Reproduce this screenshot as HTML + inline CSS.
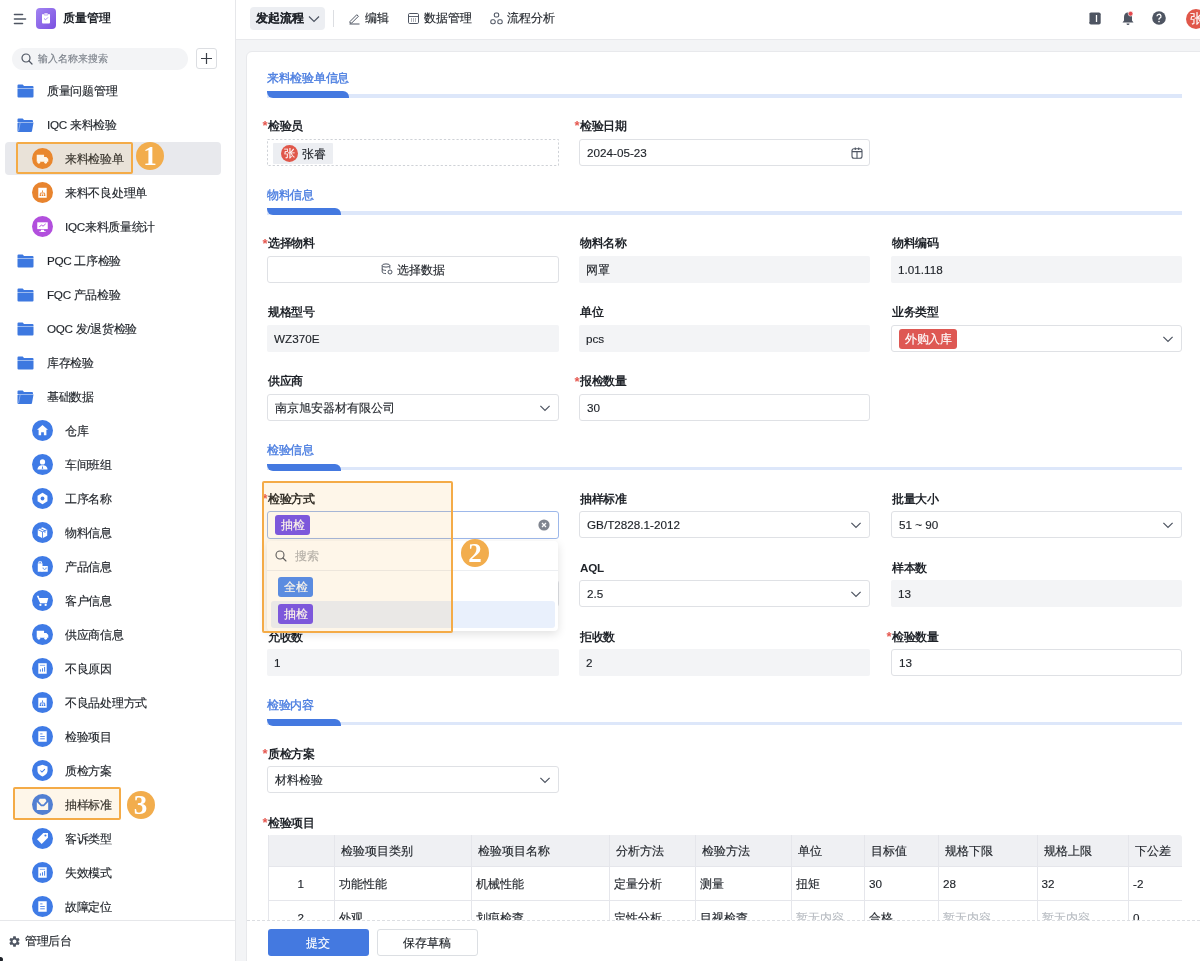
<!DOCTYPE html><html><head><meta charset="utf-8"><style>
*{box-sizing:border-box;margin:0;padding:0}
html,body{width:1200px;height:961px;overflow:hidden;background:#fff;font-family:"Liberation Sans",sans-serif;color:#1f2329;font-size:11.7px}
.A{position:absolute}
#side{position:absolute;left:0;top:0;width:236px;height:961px;background:#fff;border-right:1px solid #e6e7ea}
#top{position:absolute;left:236px;top:0;width:964px;height:40px;background:#fff;border-bottom:1px solid #e8e9ec}
#gray{position:absolute;left:236px;top:40px;width:964px;height:921px;background:#f3f4f6}
#card{position:absolute;left:246px;top:51px;width:970px;height:920px;background:#fff;border:1px solid #e8e9ec;border-radius:6px}
.mt{position:absolute;font-size:11.7px;line-height:14px;letter-spacing:-0.3px;color:#1f2329;white-space:nowrap}
.mic{position:absolute}
.sec{position:absolute;font-size:11.7px;letter-spacing:-0.3px;-webkit-text-stroke-width:0.35px;color:#4a7de0;line-height:14px;white-space:nowrap}
.bar{position:absolute;height:3.5px;background:#dde7fa}
.bard{position:absolute;height:7px;background:#4479e0;border-radius:0 6px 0 6px}
.lbl{position:absolute;-webkit-text-stroke-width:0;font-size:11.7px;letter-spacing:-0.3px;font-weight:bold;line-height:14px;white-space:nowrap;color:#1f2329}
.lbl i{font-style:normal;color:#e5574f;font-weight:bold;font-size:13px;position:absolute;left:-5.5px;top:0.5px}
.inp{position:absolute;height:27px;border:1px solid #dfe1e5;border-radius:3px;background:#fff;font-size:11.7px;line-height:25px;padding-left:7px;white-space:nowrap}
.ro{position:absolute;height:27px;background:#f3f4f6;border-radius:2px;font-size:11.7px;line-height:27px;padding-left:7px;white-space:nowrap}
.chev{position:absolute;right:7px;top:8px}
.tag{position:absolute;height:20px;line-height:20px;border-radius:3px;color:#fff;font-size:11.7px;padding:0 6px;letter-spacing:-0.5px;white-space:nowrap}
table{border-collapse:collapse}
</style></head><body><div id="root" style="position:absolute;left:0;top:0;width:1200px;height:961px;overflow:hidden;will-change:transform;-webkit-text-stroke-width:0.15px">
<div id="side">
<svg class="A" style="left:13px;top:13px" width="14" height="12" viewBox="0 0 14 12"><path d="M1.5 1.5h8M1.5 6h11M1.5 10.5h8" stroke="#4e5562" stroke-width="1.6" stroke-linecap="round"/></svg>
<div class="A" style="left:36px;top:8px;width:20px;height:21px;border-radius:4px;background:linear-gradient(135deg,#a284f2,#7a4fe0)"></div>
<svg class="A" style="left:36px;top:8px" width="20" height="21" viewBox="0 0 20 21"><rect x="6" y="6" width="8" height="9.5" rx="1" fill="#fff"/><rect x="8" y="5" width="4" height="2" rx="0.6" fill="#fff" stroke="#8d66ea" stroke-width="0.6"/><path d="M8 10.5l1.6 1.3 2.4-2.4" stroke="#9b7bef" stroke-width="0.9" fill="none"/></svg>
<div class="A" style="left:63px;top:11px;font-size:11.7px;font-weight:bold;line-height:14px;color:#1f2329;-webkit-text-stroke-width:0">质量管理</div>
<div class="A" style="left:12px;top:48px;width:176px;height:22px;border-radius:11px;background:#f3f4f6"></div>
<svg class="A" style="left:21px;top:53px" width="12" height="12" viewBox="0 0 12 12"><circle cx="5" cy="5" r="4" stroke="#4e5562" stroke-width="1.2" fill="none"/><path d="M8 8l3 3" stroke="#4e5562" stroke-width="1.2" stroke-linecap="round"/></svg>
<div class="A" style="left:38px;top:52px;font-size:10px;line-height:14px;color:#7d838c">输入名称来搜索</div>
<div class="A" style="left:196px;top:48px;width:21px;height:21px;border:1px solid #dcdee2;border-radius:3px"></div>
<svg class="A" style="left:196px;top:48px" width="21" height="21" viewBox="0 0 21 21"><path d="M10.5 5v11M5 10.5h11" stroke="#3a3f47" stroke-width="1.2"/></svg>
<div class="A" style="left:5px;top:142px;width:216px;height:33px;border-radius:4px;background:#e8e9ed"></div>
<div class="mic" style="left:17px;top:84px"><svg width="17" height="14" viewBox="0 0 17 14"><path d="M0.5 1.5a1 1 0 0 1 1-1h4.2l1.3 1.4h8.5a1 1 0 0 1 1 1v1.2h-16z" fill="#3d78e0"/><path d="M0.5 4.6h16v8a1 1 0 0 1-1 1h-14a1 1 0 0 1-1-1z" fill="#3d78e0"/></svg></div>
<div class="mt" style="left:47px;top:84px">质量问题管理</div>
<div class="mic" style="left:17px;top:118px"><svg width="17" height="14" viewBox="0 0 17 14"><path d="M0.5 1.5a1 1 0 0 1 1-1h4.2l1.3 1.4h8a1 1 0 0 1 1 1v1.2h-15.5z" fill="#3d78e0"/><path d="M0.5 12.5v-7.5a1 1 0 0 1 1-0.4h15l-1.5 8.5a1 1 0 0 1-1 0.9h-12.5a1 1 0 0 1-1-1z" fill="#3d78e0"/><path d="M1.5 13.2l1.6-8.2" stroke="#b9cdf5" stroke-width="0.6" fill="none"/></svg></div>
<div class="mt" style="left:47px;top:118px">IQC 来料检验</div>
<div class="mic" style="left:32px;top:148px"><svg width="21" height="21" viewBox="0 0 20 20"><circle cx="10" cy="10" r="10" fill="#e8842e"/><path d="M4.5 6.5h7v6.5h-7z M11.5 8.5h2.2l1.8 2v2.5h-4z" fill="#fff"/><circle cx="6.5" cy="13.6" r="1.3" fill="#fff"/><circle cx="13" cy="13.6" r="1.3" fill="#fff"/></svg></div>
<div class="mt" style="left:65px;top:152px">来料检验单</div>
<div class="mic" style="left:32px;top:182px"><svg width="21" height="21" viewBox="0 0 20 20"><circle cx="10" cy="10" r="10" fill="#e8842e"/><path d="M6 5.5h8v9.5h-8z" fill="#fff"/><path d="M10 8v2M8 12v-1.5h4V12" stroke="#e8842e" stroke-width="0.8" fill="none"/><circle cx="8" cy="12.5" r="0.8" fill="#e8842e"/><circle cx="10" cy="12.5" r="0.8" fill="#e8842e"/><circle cx="12" cy="12.5" r="0.8" fill="#e8842e"/></svg></div>
<div class="mt" style="left:65px;top:186px">来料不良处理单</div>
<div class="mic" style="left:32px;top:216px"><svg width="21" height="21" viewBox="0 0 20 20"><circle cx="10" cy="10" r="10" fill="#b24fdd"/><path d="M5 6h10v6.5h-10z" fill="#fff"/><path d="M8.5 14.5h3v-1.5h-3z M7 14.5h6v0.8h-6z" fill="#fff"/><path d="M7 10.5l2-2 1.5 1.2 2.5-2.2" stroke="#b24fdd" stroke-width="0.9" fill="none"/></svg></div>
<div class="mt" style="left:65px;top:220px">IQC来料质量统计</div>
<div class="mic" style="left:17px;top:254px"><svg width="17" height="14" viewBox="0 0 17 14"><path d="M0.5 1.5a1 1 0 0 1 1-1h4.2l1.3 1.4h8.5a1 1 0 0 1 1 1v1.2h-16z" fill="#3d78e0"/><path d="M0.5 4.6h16v8a1 1 0 0 1-1 1h-14a1 1 0 0 1-1-1z" fill="#3d78e0"/></svg></div>
<div class="mt" style="left:47px;top:254px">PQC 工序检验</div>
<div class="mic" style="left:17px;top:288px"><svg width="17" height="14" viewBox="0 0 17 14"><path d="M0.5 1.5a1 1 0 0 1 1-1h4.2l1.3 1.4h8.5a1 1 0 0 1 1 1v1.2h-16z" fill="#3d78e0"/><path d="M0.5 4.6h16v8a1 1 0 0 1-1 1h-14a1 1 0 0 1-1-1z" fill="#3d78e0"/></svg></div>
<div class="mt" style="left:47px;top:288px">FQC 产品检验</div>
<div class="mic" style="left:17px;top:322px"><svg width="17" height="14" viewBox="0 0 17 14"><path d="M0.5 1.5a1 1 0 0 1 1-1h4.2l1.3 1.4h8.5a1 1 0 0 1 1 1v1.2h-16z" fill="#3d78e0"/><path d="M0.5 4.6h16v8a1 1 0 0 1-1 1h-14a1 1 0 0 1-1-1z" fill="#3d78e0"/></svg></div>
<div class="mt" style="left:47px;top:322px">OQC 发/退货检验</div>
<div class="mic" style="left:17px;top:356px"><svg width="17" height="14" viewBox="0 0 17 14"><path d="M0.5 1.5a1 1 0 0 1 1-1h4.2l1.3 1.4h8.5a1 1 0 0 1 1 1v1.2h-16z" fill="#3d78e0"/><path d="M0.5 4.6h16v8a1 1 0 0 1-1 1h-14a1 1 0 0 1-1-1z" fill="#3d78e0"/></svg></div>
<div class="mt" style="left:47px;top:356px">库存检验</div>
<div class="mic" style="left:17px;top:390px"><svg width="17" height="14" viewBox="0 0 17 14"><path d="M0.5 1.5a1 1 0 0 1 1-1h4.2l1.3 1.4h8a1 1 0 0 1 1 1v1.2h-15.5z" fill="#3d78e0"/><path d="M0.5 12.5v-7.5a1 1 0 0 1 1-0.4h15l-1.5 8.5a1 1 0 0 1-1 0.9h-12.5a1 1 0 0 1-1-1z" fill="#3d78e0"/><path d="M1.5 13.2l1.6-8.2" stroke="#b9cdf5" stroke-width="0.6" fill="none"/></svg></div>
<div class="mt" style="left:47px;top:390px">基础数据</div>
<div class="mic" style="left:32px;top:420px"><svg width="21" height="21" viewBox="0 0 20 20"><circle cx="10" cy="10" r="10" fill="#3f7be6"/><path d="M10 4.8l5.2 4.6h-1.5v5.2h-2.4v-3h-2.6v3h-2.4v-5.2h-1.5z" fill="#fff"/></svg></div>
<div class="mt" style="left:65px;top:424px">仓库</div>
<div class="mic" style="left:32px;top:454px"><svg width="21" height="21" viewBox="0 0 20 20"><circle cx="10" cy="10" r="10" fill="#3f7be6"/><circle cx="10" cy="7.6" r="2.5" fill="#fff"/><path d="M5.2 14.8c0-2.8 2.2-4.2 4.8-4.2s4.8 1.4 4.8 4.2z" fill="#fff"/><path d="M10 11l-0.7 3h1.4z" fill="#3f7be6"/></svg></div>
<div class="mt" style="left:65px;top:458px">车间班组</div>
<div class="mic" style="left:32px;top:488px"><svg width="21" height="21" viewBox="0 0 20 20"><circle cx="10" cy="10" r="10" fill="#3f7be6"/><path d="M10 4.6l4.7 2.7v5.4l-4.7 2.7-4.7-2.7v-5.4z" fill="#fff"/><circle cx="10" cy="10" r="1.8" fill="#3f7be6"/></svg></div>
<div class="mt" style="left:65px;top:492px">工序名称</div>
<div class="mic" style="left:32px;top:522px"><svg width="21" height="21" viewBox="0 0 20 20"><circle cx="10" cy="10" r="10" fill="#3f7be6"/><path d="M5.5 7.2l4.5-2.2 4.5 2.2v6l-4.5 2.2-4.5-2.2z" fill="#fff"/><path d="M5.5 7.2l4.5 2.2 4.5-2.2M10 9.4v6M7.8 6.1l4.5 2.2v2" stroke="#3f7be6" stroke-width="0.8" fill="none"/></svg></div>
<div class="mt" style="left:65px;top:526px">物料信息</div>
<div class="mic" style="left:32px;top:556px"><svg width="21" height="21" viewBox="0 0 20 20"><circle cx="10" cy="10" r="10" fill="#3f7be6"/><path d="M5.5 7h4.5v8h-4.5z" fill="#fff"/><path d="M9 9.5h6v5.5h-6z" fill="#fff"/><path d="M10.5 11c0 1.2 0.8 1.8 1.5 1.8s1.5-0.6 1.5-1.8" stroke="#3f7be6" stroke-width="0.8" fill="none"/><path d="M6.5 7v-1.5h2.5V7" stroke="#fff" stroke-width="0.9" fill="none"/></svg></div>
<div class="mt" style="left:65px;top:560px">产品信息</div>
<div class="mic" style="left:32px;top:590px"><svg width="21" height="21" viewBox="0 0 20 20"><circle cx="10" cy="10" r="10" fill="#3f7be6"/><path d="M4.5 5.5h1.8l0.7 2h8.5l-1.3 5h-6.4z" fill="#fff"/><circle cx="8" cy="14.2" r="1.1" fill="#fff"/><circle cx="13" cy="14.2" r="1.1" fill="#fff"/></svg></div>
<div class="mt" style="left:65px;top:594px">客户信息</div>
<div class="mic" style="left:32px;top:624px"><svg width="21" height="21" viewBox="0 0 20 20"><circle cx="10" cy="10" r="10" fill="#3f7be6"/><path d="M4.5 6.5h7v6.5h-7z M11.5 8.5h2.2l1.8 2v2.5h-4z" fill="#fff"/><circle cx="6.5" cy="13.6" r="1.3" fill="#fff"/><circle cx="13" cy="13.6" r="1.3" fill="#fff"/></svg></div>
<div class="mt" style="left:65px;top:628px">供应商信息</div>
<div class="mic" style="left:32px;top:658px"><svg width="21" height="21" viewBox="0 0 20 20"><circle cx="10" cy="10" r="10" fill="#3f7be6"/><path d="M6 5h8v10h-8z" fill="#fff"/><path d="M8 13v-2.2M10 13v-3.2M12 13v-4.5" stroke="#3f7be6" stroke-width="0.9"/><path d="M7.5 7h5" stroke="#3f7be6" stroke-width="0.6"/></svg></div>
<div class="mt" style="left:65px;top:662px">不良原因</div>
<div class="mic" style="left:32px;top:692px"><svg width="21" height="21" viewBox="0 0 20 20"><circle cx="10" cy="10" r="10" fill="#3f7be6"/><path d="M6 5.5h8v9.5h-8z" fill="#fff"/><path d="M10 8v2M8 12v-1.5h4V12" stroke="#3f7be6" stroke-width="0.8" fill="none"/><circle cx="8" cy="12.5" r="0.8" fill="#3f7be6"/><circle cx="10" cy="12.5" r="0.8" fill="#3f7be6"/><circle cx="12" cy="12.5" r="0.8" fill="#3f7be6"/></svg></div>
<div class="mt" style="left:65px;top:696px">不良品处理方式</div>
<div class="mic" style="left:32px;top:726px"><svg width="21" height="21" viewBox="0 0 20 20"><circle cx="10" cy="10" r="10" fill="#3f7be6"/><path d="M6 5h8v10h-8z" fill="#fff"/><path d="M7.8 7.5h2.2M7.8 10h4.4M7.8 12.2h4.4" stroke="#3f7be6" stroke-width="0.8"/></svg></div>
<div class="mt" style="left:65px;top:730px">检验项目</div>
<div class="mic" style="left:32px;top:760px"><svg width="21" height="21" viewBox="0 0 20 20"><circle cx="10" cy="10" r="10" fill="#3f7be6"/><path d="M10 4.5l4.8 1.8v3.8c0 3-2.3 4.6-4.8 5.5-2.5-0.9-4.8-2.5-4.8-5.5v-3.8z" fill="#fff"/><path d="M8 10l1.5 1.5 2.8-2.8" stroke="#3f7be6" stroke-width="1" fill="none"/></svg></div>
<div class="mt" style="left:65px;top:764px">质检方案</div>
<div class="mic" style="left:32px;top:794px"><svg width="21" height="21" viewBox="0 0 20 20"><circle cx="10" cy="10" r="10" fill="#3f7be6"/><path d="M4.6 7.6L8.6 11.6H11.4L15.4 7.6V15.2H4.6Z" fill="#fff"/><path d="M6.2 6.6L7.4 4.6H12.6L13.8 6.6L10.9 9.9H9.1Z" fill="#fff"/></svg></div>
<div class="mt" style="left:65px;top:798px">抽样标准</div>
<div class="mic" style="left:32px;top:828px"><svg width="21" height="21" viewBox="0 0 20 20"><circle cx="10" cy="10" r="10" fill="#3f7be6"/><path d="M10.8 4.8h4.4v4.4l-6 6-4.4-4.4z" fill="#fff"/><circle cx="12.8" cy="7.2" r="1" fill="#3f7be6"/></svg></div>
<div class="mt" style="left:65px;top:832px">客诉类型</div>
<div class="mic" style="left:32px;top:862px"><svg width="21" height="21" viewBox="0 0 20 20"><circle cx="10" cy="10" r="10" fill="#3f7be6"/><path d="M6 5h8v10h-8z" fill="#fff"/><path d="M8 13v-2.2M10 13v-3.2M12 13v-4.5" stroke="#3f7be6" stroke-width="0.9"/><path d="M7.5 7h5" stroke="#3f7be6" stroke-width="0.6"/></svg></div>
<div class="mt" style="left:65px;top:866px">失效模式</div>
<div class="mic" style="left:32px;top:896px"><svg width="21" height="21" viewBox="0 0 20 20"><circle cx="10" cy="10" r="10" fill="#3f7be6"/><path d="M6 5h8v10h-8z" fill="#fff"/><path d="M7.8 7.5h2.2M7.8 10h4.4M7.8 12.2h4.4" stroke="#3f7be6" stroke-width="0.8"/></svg></div>
<div class="mt" style="left:65px;top:900px">故障定位</div>
<div class="A" style="left:0;top:920px;width:235px;height:1px;background:#e6e7ea"></div>
<svg class="A" style="left:8px;top:935px" width="13" height="13" viewBox="0 0 24 24"><path fill="#4e5562" d="M19.14 12.94c.04-.3.06-.61.06-.94s-.02-.64-.07-.94l2.03-1.58a.49.49 0 0 0 .12-.61l-1.92-3.32a.49.49 0 0 0-.59-.22l-2.39.96c-.5-.38-1.03-.7-1.62-.94l-.36-2.54a.48.48 0 0 0-.48-.41h-3.84c-.24 0-.43.17-.47.41l-.36 2.54c-.59.24-1.13.57-1.62.94l-2.39-.96a.48.48 0 0 0-.59.22L2.74 8.87c-.12.21-.08.47.12.61l2.03 1.58c-.05.3-.09.63-.09.94s.02.64.07.94l-2.03 1.58a.49.49 0 0 0-.12.61l1.92 3.32c.12.22.37.29.59.22l2.39-.96c.5.38 1.03.7 1.62.94l.36 2.54c.05.24.24.41.48.41h3.84c.24 0 .44-.17.47-.41l.36-2.54c.59-.24 1.13-.56 1.62-.94l2.39.96c.22.08.47 0 .59-.22l1.92-3.32c.12-.22.07-.47-.12-.61l-2.01-1.58zM12 15.6c-1.98 0-3.6-1.62-3.6-3.6s1.62-3.6 3.6-3.6 3.6 1.62 3.6 3.6-1.62 3.6-3.6 3.6z"/></svg>
<div class="mt" style="left:25px;top:934px">管理后台</div>
<div class="A" style="left:-2px;top:957px;width:5px;height:5px;border-radius:3px;background:#1f2329"></div>
</div>
<div id="top">
<div class="A" style="left:14px;top:7px;width:75px;height:23px;border-radius:4px;background:#eceef2"></div>
<div class="A" style="left:20px;top:11px;font-size:11.7px;font-weight:bold;line-height:14px;-webkit-text-stroke-width:0.1px">发起流程</div>
<svg class="A" style="left:72px;top:15px" width="12" height="8" viewBox="0 0 12 8"><path d="M1 1.5l5 5 5-5" stroke="#4e5562" stroke-width="1.2" fill="none"/></svg>
<div class="A" style="left:97px;top:10px;width:1px;height:17px;background:#dcdee2"></div>
<svg class="A" style="left:112px;top:12px" width="13" height="13" viewBox="0 0 13 13"><path d="M2 9.5l6.8-6.8 1.6 1.6-6.8 6.8H2z" stroke="#4e5562" stroke-width="1" fill="none" stroke-linejoin="round"/><path d="M1.5 12h10" stroke="#4e5562" stroke-width="1"/></svg>
<div class="A" style="left:129px;top:11px;font-size:11.7px;line-height:14px">编辑</div>
<svg class="A" style="left:171px;top:12px" width="13" height="13" viewBox="0 0 13 13"><rect x="1.5" y="1.5" width="10" height="10" rx="1.2" stroke="#4e5562" stroke-width="1" fill="none"/><path d="M1.5 4.5h10M4 7h1M6 7h1M8 7h1M4 9h1M6 9h1M8 9h1" stroke="#4e5562" stroke-width="0.9"/></svg>
<div class="A" style="left:188px;top:11px;font-size:11.7px;line-height:14px">数据管理</div>
<svg class="A" style="left:254px;top:12px" width="13" height="13" viewBox="0 0 13 13"><rect x="4.3" y="1" width="4.4" height="4" rx="1.6" stroke="#4e5562" stroke-width="1.1" fill="none"/><rect x="0.8" y="7.8" width="4.4" height="4" rx="1.6" stroke="#4e5562" stroke-width="1.1" fill="none"/><rect x="7.8" y="7.8" width="4.4" height="4" rx="1.6" stroke="#4e5562" stroke-width="1.1" fill="none"/></svg>
<div class="A" style="left:271px;top:11px;font-size:11.7px;line-height:14px">流程分析</div>
<svg class="A" style="left:852px;top:12px" width="13" height="13" viewBox="0 0 13 13"><rect x="1.2" y="0.5" width="11.5" height="12" rx="1.8" fill="#4e5562"/><path d="M0 3h2M0 5h2M0 7h2M0 9h2" stroke="#fff" stroke-width="0.7"/><path d="M8.5 3v7" stroke="#fff" stroke-width="1.3"/></svg>
<svg class="A" style="left:885px;top:10px" width="14" height="16" viewBox="0 0 14 16"><path d="M7 2.5c-2.5 0-4 2-4 4.5v3.5l-1.5 2h11l-1.5-2V7c0-2.5-1.5-4.5-4-4.5z" fill="#4e5562"/><path d="M5.5 13.5a1.5 1.5 0 0 0 3 0z" fill="#4e5562"/><circle cx="9.6" cy="3.7" r="2.4" fill="#e5484d" stroke="#fff" stroke-width="0.6"/></svg>
<svg class="A" style="left:916px;top:11px" width="14" height="14" viewBox="0 0 14 14"><circle cx="7" cy="7" r="6.8" fill="#4e5562"/><path d="M5 5.3a2 2 0 1 1 2.8 1.8c-.6.3-.8.6-.8 1.2v.5" stroke="#fff" stroke-width="1.3" fill="none"/><circle cx="7" cy="10.6" r="0.8" fill="#fff"/></svg>
<div class="A" style="left:950px;top:9px;width:20px;height:20px;border-radius:10px;background:#e0574a;color:#fff;font-size:13px;line-height:20px;text-align:center">张</div>
</div>
<div id="gray"></div>
<div id="card"></div>
<div class="sec" style="left:267px;top:70.5px">来料检验单信息</div>
<div class="bar" style="left:267px;top:94.0px;width:915px"></div>
<div class="bard" style="left:267px;top:91.0px;width:82px"></div>
<div class="lbl" style="left:268px;top:118.5px"><i>*</i>检验员</div>
<div class="lbl" style="left:580px;top:118.5px"><i>*</i>检验日期</div>
<svg class="A" style="left:267px;top:139px" width="292" height="27"><rect x="0.5" y="0.5" width="291" height="26" fill="none" stroke="#cfd2d7" stroke-dasharray="2.2 2"/></svg>
<div class="A" style="left:273px;top:143px;width:60px;height:21px;background:#eceef2;border-radius:1px"></div>
<div class="A" style="left:281px;top:145px;width:17px;height:17px;border-radius:9px;background:#e0574a;color:#fff;font-size:11px;line-height:17px;text-align:center">张</div>
<div class="A" style="left:302px;top:147px;font-size:11.7px;line-height:14px">张睿</div>
<div class="inp" style="left:579px;top:139px;width:291px">2024-05-23<svg class="A" style="right:6px;top:7px" width="12" height="12" viewBox="0 0 12 12"><rect x="1" y="1.8" width="10" height="9.4" rx="2" stroke="#4e5562" stroke-width="1.1" fill="none"/><path d="M1 4.6h10M6 4.6v6.6M4.3 0.6v2.4M7.7 0.6v2.4" stroke="#4e5562" stroke-width="1.1"/></svg></div>
<div class="sec" style="left:267px;top:187.7px">物料信息</div>
<div class="bar" style="left:267px;top:211.2px;width:915px"></div>
<div class="bard" style="left:267px;top:208.2px;width:74px"></div>
<div class="lbl" style="left:268px;top:236.2px"><i>*</i>选择物料</div>
<div class="lbl" style="left:580px;top:236.2px">物料名称</div>
<div class="lbl" style="left:892px;top:236.2px">物料编码</div>
<div class="inp" style="left:267px;top:256px;width:292px;text-align:center;padding-left:0"><svg width="12" height="12" viewBox="0 0 12 12" style="vertical-align:-1px;margin-right:4px"><ellipse cx="5" cy="2.5" rx="3.8" ry="1.6" stroke="#4e5562" stroke-width="1" fill="none"/><path d="M1.2 2.5v6.5c0 .9 1.7 1.6 3.8 1.6M8.8 2.5v3" stroke="#4e5562" stroke-width="1" fill="none"/><path d="M1.2 5.8c0 .9 1.7 1.6 3.8 1.6" stroke="#4e5562" stroke-width="1" fill="none"/><circle cx="9" cy="9" r="2" stroke="#4e5562" stroke-width="1" fill="#fff"/></svg>选择数据</div>
<div class="ro" style="left:579px;top:256px;width:291px">网罩</div>
<div class="ro" style="left:891px;top:256px;width:291px">1.01.118</div>
<div class="lbl" style="left:268px;top:305px">规格型号</div>
<div class="lbl" style="left:580px;top:305px">单位</div>
<div class="lbl" style="left:892px;top:305px">业务类型</div>
<div class="ro" style="left:267px;top:325px;width:292px">WZ370E</div>
<div class="ro" style="left:579px;top:325px;width:291px">pcs</div>
<div class="inp" style="left:891px;top:325px;width:291px"><svg class="chev" width="12" height="9" viewBox="0 0 12 9"><path d="M1.4 2.9l4.6 4.6 4.6-4.6" stroke="#4e5562" stroke-width="1.2" fill="none"/></svg><div class="tag" style="left:7px;top:2.5px;background:#de5853">外购入库</div></div>
<div class="lbl" style="left:268px;top:374px">供应商</div>
<div class="lbl" style="left:580px;top:374px"><i>*</i>报检数量</div>
<div class="inp" style="left:267px;top:394px;width:292px">南京旭安器材有限公司<svg class="chev" width="12" height="9" viewBox="0 0 12 9"><path d="M1.4 2.9l4.6 4.6 4.6-4.6" stroke="#4e5562" stroke-width="1.2" fill="none"/></svg></div>
<div class="inp" style="left:579px;top:394px;width:291px">30</div>
<div class="sec" style="left:267px;top:443px">检验信息</div>
<div class="bar" style="left:267px;top:466.5px;width:915px"></div>
<div class="bard" style="left:267px;top:463.5px;width:74px"></div>
<div class="lbl" style="left:268px;top:491.5px"><i>*</i>检验方式</div>
<div class="lbl" style="left:580px;top:491.5px">抽样标准</div>
<div class="lbl" style="left:892px;top:491.5px">批量大小</div>
<div class="inp" style="left:267px;top:511px;width:292px;height:28px;border-color:#9db8ea"><svg class="A" style="right:8px;top:7px" width="12" height="12" viewBox="0 0 12 12"><circle cx="6" cy="6" r="5.6" fill="#80858f"/><path d="M4 4l4 4M8 4l-4 4" stroke="#fff" stroke-width="1.2"/></svg><div class="tag" style="left:7px;top:3px;background:#7050f0">抽检</div></div>
<div class="inp" style="left:579px;top:511px;width:291px">GB/T2828.1-2012<svg class="chev" width="12" height="9" viewBox="0 0 12 9"><path d="M1.4 2.9l4.6 4.6 4.6-4.6" stroke="#4e5562" stroke-width="1.2" fill="none"/></svg></div>
<div class="inp" style="left:891px;top:511px;width:291px">51 ~ 90<svg class="chev" width="12" height="9" viewBox="0 0 12 9"><path d="M1.4 2.9l4.6 4.6 4.6-4.6" stroke="#4e5562" stroke-width="1.2" fill="none"/></svg></div>
<div class="lbl" style="left:580px;top:560.5px">AQL</div>
<div class="lbl" style="left:892px;top:560.5px">样本数</div>
<div class="inp" style="left:267px;top:580px;width:292px"><svg class="chev" width="12" height="9" viewBox="0 0 12 9"><path d="M1.4 2.9l4.6 4.6 4.6-4.6" stroke="#4e5562" stroke-width="1.2" fill="none"/></svg></div>
<div class="inp" style="left:579px;top:580px;width:291px">2.5<svg class="chev" width="12" height="9" viewBox="0 0 12 9"><path d="M1.4 2.9l4.6 4.6 4.6-4.6" stroke="#4e5562" stroke-width="1.2" fill="none"/></svg></div>
<div class="ro" style="left:891px;top:580px;width:291px">13</div>
<div class="lbl" style="left:268px;top:629.5px">允收数</div>
<div class="lbl" style="left:580px;top:629.5px">拒收数</div>
<div class="lbl" style="left:892px;top:629.5px"><i>*</i>检验数量</div>
<div class="ro" style="left:267px;top:649px;width:292px">1</div>
<div class="ro" style="left:579px;top:649px;width:291px">2</div>
<div class="inp" style="left:891px;top:649px;width:291px">13</div>
<div class="sec" style="left:267px;top:698px">检验内容</div>
<div class="bar" style="left:267px;top:721.5px;width:915px"></div>
<div class="bard" style="left:267px;top:718.5px;width:74px"></div>
<div class="lbl" style="left:268px;top:746.5px"><i>*</i>质检方案</div>
<div class="inp" style="left:267px;top:766px;width:292px">材料检验<svg class="chev" width="12" height="9" viewBox="0 0 12 9"><path d="M1.4 2.9l4.6 4.6 4.6-4.6" stroke="#4e5562" stroke-width="1.2" fill="none"/></svg></div>
<div class="lbl" style="left:268px;top:815.5px"><i>*</i>检验项目</div>
<div class="A" style="left:267.5px;top:835px;width:914.5px;height:31px;background:#eff0f3;border-radius:3px 3px 0 0"></div>
<div class="A" style="left:267.5px;top:866px;width:914.5px;height:1px;background:#e5e6eb"></div>
<div class="A" style="left:267.5px;top:900px;width:914.5px;height:1px;background:#e5e6eb"></div>
<div class="A" style="left:267.5px;top:934px;width:914.5px;height:1px;background:#e5e6eb"></div>
<div class="A" style="left:267.5px;top:835px;width:1px;height:100px;background:#e5e6eb"></div>
<div class="A" style="left:334px;top:835px;width:1px;height:100px;background:#e5e6eb"></div>
<div class="A" style="left:471px;top:835px;width:1px;height:100px;background:#e5e6eb"></div>
<div class="A" style="left:609px;top:835px;width:1px;height:100px;background:#e5e6eb"></div>
<div class="A" style="left:695px;top:835px;width:1px;height:100px;background:#e5e6eb"></div>
<div class="A" style="left:790.5px;top:835px;width:1px;height:100px;background:#e5e6eb"></div>
<div class="A" style="left:864px;top:835px;width:1px;height:100px;background:#e5e6eb"></div>
<div class="A" style="left:938px;top:835px;width:1px;height:100px;background:#e5e6eb"></div>
<div class="A" style="left:1036.5px;top:835px;width:1px;height:100px;background:#e5e6eb"></div>
<div class="A" style="left:1128px;top:835px;width:1px;height:100px;background:#e5e6eb"></div>
<div class="A" style="left:267.5px;width:66.5px;text-align:center;top:877px;font-size:11.7px;line-height:14px;color:#1f2329">1</div>
<div class="A" style="left:267.5px;width:66.5px;text-align:center;top:911px;font-size:11.7px;line-height:14px;color:#1f2329">2</div>
<div class="A" style="left:341px;top:844px;font-size:11.7px;line-height:14px;color:#1f2329">检验项目类别</div>
<div class="A" style="left:339px;top:877px;font-size:11.7px;line-height:14px;color:#1f2329">功能性能</div>
<div class="A" style="left:339px;top:911px;font-size:11.7px;line-height:14px;color:#1f2329">外观</div>
<div class="A" style="left:478px;top:844px;font-size:11.7px;line-height:14px;color:#1f2329">检验项目名称</div>
<div class="A" style="left:476px;top:877px;font-size:11.7px;line-height:14px;color:#1f2329">机械性能</div>
<div class="A" style="left:476px;top:911px;font-size:11.7px;line-height:14px;color:#1f2329">划痕检查</div>
<div class="A" style="left:616px;top:844px;font-size:11.7px;line-height:14px;color:#1f2329">分析方法</div>
<div class="A" style="left:614px;top:877px;font-size:11.7px;line-height:14px;color:#1f2329">定量分析</div>
<div class="A" style="left:614px;top:911px;font-size:11.7px;line-height:14px;color:#1f2329">定性分析</div>
<div class="A" style="left:702px;top:844px;font-size:11.7px;line-height:14px;color:#1f2329">检验方法</div>
<div class="A" style="left:700px;top:877px;font-size:11.7px;line-height:14px;color:#1f2329">测量</div>
<div class="A" style="left:700px;top:911px;font-size:11.7px;line-height:14px;color:#1f2329">目视检查</div>
<div class="A" style="left:797.5px;top:844px;font-size:11.7px;line-height:14px;color:#1f2329">单位</div>
<div class="A" style="left:795.5px;top:877px;font-size:11.7px;line-height:14px;color:#1f2329">扭矩</div>
<div class="A" style="left:795.5px;top:911px;font-size:11.7px;line-height:14px;color:#b8bcc2">暂无内容</div>
<div class="A" style="left:871px;top:844px;font-size:11.7px;line-height:14px;color:#1f2329">目标值</div>
<div class="A" style="left:869px;top:877px;font-size:11.7px;line-height:14px;color:#1f2329">30</div>
<div class="A" style="left:869px;top:911px;font-size:11.7px;line-height:14px;color:#1f2329">合格</div>
<div class="A" style="left:945px;top:844px;font-size:11.7px;line-height:14px;color:#1f2329">规格下限</div>
<div class="A" style="left:943px;top:877px;font-size:11.7px;line-height:14px;color:#1f2329">28</div>
<div class="A" style="left:943px;top:911px;font-size:11.7px;line-height:14px;color:#b8bcc2">暂无内容</div>
<div class="A" style="left:1043.5px;top:844px;font-size:11.7px;line-height:14px;color:#1f2329">规格上限</div>
<div class="A" style="left:1041.5px;top:877px;font-size:11.7px;line-height:14px;color:#1f2329">32</div>
<div class="A" style="left:1041.5px;top:911px;font-size:11.7px;line-height:14px;color:#b8bcc2">暂无内容</div>
<div class="A" style="left:1135px;top:844px;font-size:11.7px;line-height:14px;color:#1f2329">下公差</div>
<div class="A" style="left:1133px;top:877px;font-size:11.7px;line-height:14px;color:#1f2329">-2</div>
<div class="A" style="left:1133px;top:911px;font-size:11.7px;line-height:14px;color:#1f2329">0</div>
<div class="A" style="left:247px;top:920px;width:953px;height:41px;background:#fff;border-top:1px dashed #dcdee2"></div>
<div class="A" style="left:267.5px;top:929px;width:101.5px;height:27px;border-radius:3px;background:#4479e0;color:#fff;text-align:center;line-height:27px;font-size:11.7px">提交</div>
<div class="A" style="left:376.5px;top:929px;width:101.5px;height:27px;border-radius:3px;border:1px solid #dcdfe3;background:#fff;text-align:center;line-height:25px;font-size:11.7px">保存草稿</div>
<div class="A" style="left:267px;top:541px;width:291px;height:90px;background:#fff;border-radius:4px;box-shadow:0 3px 10px rgba(0,0,0,0.12)"></div>
<svg class="A" style="left:275px;top:550px" width="12" height="12" viewBox="0 0 12 12"><circle cx="5" cy="5" r="4" stroke="#4e5562" stroke-width="1.1" fill="none"/><path d="M8 8l3 3" stroke="#4e5562" stroke-width="1.1" stroke-linecap="round"/></svg>
<div class="A" style="left:295px;top:549px;font-size:11.7px;line-height:14px;color:#b0b3b8">搜索</div>
<div class="A" style="left:267px;top:569.5px;width:291px;height:1px;background:#eceef1"></div>
<div class="tag" style="left:278px;top:577px;background:#4a8af5">全检</div>
<div class="A" style="left:271px;top:601px;width:283.5px;height:27px;border-radius:3px;background:#e9f0fc"></div>
<div class="tag" style="left:278px;top:604px;background:#7050f0">抽检</div>
<div class="A" style="left:262px;top:481px;width:191px;height:152px;border:2px solid #f4ab47;border-radius:2px;background:rgba(245,166,35,0.1)"></div>
<div class="A" style="left:16px;top:142px;width:117px;height:32px;border:2px solid #f4ab47;border-radius:2px;background:rgba(245,166,35,0.1)"></div>
<div class="A" style="left:13px;top:787px;width:108px;height:33px;border:2px solid #f4ab47;border-radius:2px;background:rgba(245,166,35,0.1)"></div>
<div class="A" style="left:136px;top:142px;width:28px;height:28px;border-radius:14px;background:#f2ad4d;color:#fff;text-align:center;font-family:'Liberation Serif',serif;font-weight:bold;font-size:27px;line-height:28px;-webkit-text-stroke-width:0">1</div>
<div class="A" style="left:461px;top:538.5px;width:28px;height:28px;border-radius:14px;background:#f2ad4d;color:#fff;text-align:center;font-family:'Liberation Serif',serif;font-weight:bold;font-size:27px;line-height:28px;-webkit-text-stroke-width:0">2</div>
<div class="A" style="left:126.5px;top:791px;width:28px;height:28px;border-radius:14px;background:#f2ad4d;color:#fff;text-align:center;font-family:'Liberation Serif',serif;font-weight:bold;font-size:27px;line-height:28px;-webkit-text-stroke-width:0">3</div>
</div></body></html>
